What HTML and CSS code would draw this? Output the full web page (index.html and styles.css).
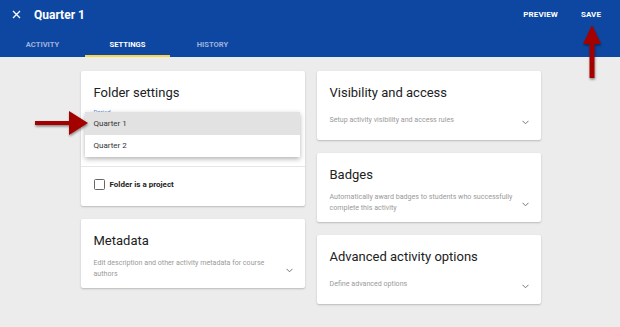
FILE: index.html
```html
<!DOCTYPE html>
<html>
<head>
<meta charset="utf-8">
<link rel="stylesheet" href="styles.css">
</head>
<body>
<header class="appbar">
  <div class="toprow">
    <svg class="close" width="9" height="9" viewBox="0 0 9 9"><path d="M1 1 L8 8 M8 1 L1 8" stroke="#fff" stroke-width="1.3" fill="none"/></svg>
    <span class="title">Quarter 1</span>
    <span class="spacer"></span>
    <span class="action">PREVIEW</span>
    <span class="action save">SAVE</span>
  </div>
  <nav class="tabs">
    <span class="tab">ACTIVITY</span>
    <span class="tab active">SETTINGS</span>
    <span class="tab">HISTORY</span>
  </nav>
</header>
<main class="grid">
  <div class="col">
    <section class="card folder">
      <h2>Folder settings</h2>
      <div class="field">
        <span class="label">Period</span>
      </div>
      <div class="menu">
        <div class="item selected">Quarter 1</div>
        <div class="item">Quarter 2</div>
      </div>
      <div class="divider"></div>
      <label class="check"><span class="box"></span>Folder is a project</label>
    </section>
    <section class="card">
      <h2>Metadata</h2>
      <div class="descrow">
        <p class="desc">Edit description and other activity metadata for course authors</p>
        <svg class="chev" width="7" height="5" viewBox="0 0 7 5"><path d="M0.5 0.8 L3.5 3.8 L6.5 0.8" stroke="#777" stroke-width="1" fill="none"/></svg>
      </div>
    </section>
  </div>
  <div class="col">
    <section class="card">
      <h2>Visibility and access</h2>
      <div class="descrow">
        <p class="desc">Setup activity visibility and access rules</p>
        <svg class="chev" width="7" height="5" viewBox="0 0 7 5"><path d="M0.5 0.8 L3.5 3.8 L6.5 0.8" stroke="#777" stroke-width="1" fill="none"/></svg>
      </div>
    </section>
    <section class="card">
      <h2>Badges</h2>
      <div class="descrow">
        <p class="desc">Automatically award badges to students who successfully complete this activity</p>
        <svg class="chev" width="7" height="5" viewBox="0 0 7 5"><path d="M0.5 0.8 L3.5 3.8 L6.5 0.8" stroke="#777" stroke-width="1" fill="none"/></svg>
      </div>
    </section>
    <section class="card">
      <h2>Advanced activity options</h2>
      <div class="descrow">
        <p class="desc">Define advanced options</p>
        <svg class="chev" width="7" height="5" viewBox="0 0 7 5"><path d="M0.5 0.8 L3.5 3.8 L6.5 0.8" stroke="#777" stroke-width="1" fill="none"/></svg>
      </div>
    </section>
  </div>
</main>
<svg class="arrow-right" width="60" height="30" viewBox="0 0 60 30">
  <path d="M2 13 L36 13 L36 3 L55 15 L36 27 L36 17 L2 17 Z" fill="#a30000" filter="url(#sh)"/>
  <defs><filter id="sh" x="-20%" y="-40%" width="140%" height="180%"><feDropShadow dx="0.5" dy="1.5" stdDeviation="1" flood-color="#000" flood-opacity="0.45"/></filter></defs>
</svg>
<svg class="arrow-up" width="26" height="60" viewBox="0 0 26 60">
  <path d="M13 1 L22 20 L15.5 20 L15.5 54 L10.5 54 L10.5 20 L4 20 Z" fill="#a30000" filter="url(#sh2)"/>
  <defs><filter id="sh2" x="-40%" y="-20%" width="180%" height="140%"><feDropShadow dx="0.5" dy="1.5" stdDeviation="1" flood-color="#000" flood-opacity="0.45"/></filter></defs>
</svg>
</body>
</html>
```
FILE: styles.css
```css
* { box-sizing: border-box; }
html, body { margin: 0; padding: 0; }
body {
  width: 620px;
  height: 327px;
  background: #ececec;
  font-family: Roboto, "Liberation Sans", sans-serif;
  position: relative;
  overflow: hidden;
}
.appbar {
  background: #0d47a1;
  height: 57px;
  color: #fff;
}
.toprow {
  height: 30px;
  display: flex;
  align-items: center;
  padding-left: 12px;
  padding-right: 19px;
}
.close { margin-top: -1px; }
.title {
  margin-left: 13px;
  font-weight: 700;
  font-size: 12px;
  margin-top: -1px;
}
.spacer { flex: 1; }
.action {
  font-size: 8px;
  font-weight: 700;
  letter-spacing: 0.1px;
  margin-top: -1px;
}
.save { margin-left: 23px; }
.tabs {
  display: flex;
  height: 27px;
}
.tab {
  width: 85px;
  display: flex;
  align-items: center;
  justify-content: center;
  font-size: 7.6px;
  font-weight: 700;
  color: #9fb2dc;
  padding-top: 2px;
}
.tab.active {
  color: #fff;
  border-bottom: 2px solid #f5d74a;
  padding-top: 4px;
}
.grid {
  display: grid;
  grid-template-columns: 224px 224px;
  column-gap: 12px;
  justify-content: center;
  padding-top: 14px;
  padding-left: 1px;
}
.col {
  display: flex;
  flex-direction: column;
  gap: 13px;
}
.card {
  background: #fff;
  box-shadow: 0 1px 2px rgba(0,0,0,0.22);
  border-radius: 2px;
  padding: 13px 12px 0 13px;
  height: 69px;
  position: relative;
}
.card h2 {
  margin: 0;
  font-size: 13px;
  font-weight: 400;
  color: #212121;
  line-height: 18px;
}
.descrow {
  display: flex;
  align-items: center;
  margin-top: 8px;
  min-height: 21px;
}
.desc {
  margin: 0;
  flex: 1;
  font-size: 7.1px;
  line-height: 10.5px;
  color: #9a9a9a;
  padding-right: 1px;
}
.chev { margin-top: 3px; }
.card.folder {
  height: 135px;
  padding-left: 0;
  padding-right: 0;
}
.folder h2 { padding-left: 13px; }
.field { height: 32px; padding-left: 13px; padding-top: 6px; }
.label {
  font-size: 6px;
  color: #5a8fd8;
  display: block;
}
.menu {
  position: absolute;
  left: 4px;
  top: 41px;
  width: 215px;
  background: #fff;
  box-shadow: 0 2px 5px rgba(0,0,0,0.3);
}
.item {
  height: 22.5px;
  display: flex;
  align-items: center;
  padding-left: 9px;
  font-size: 8px;
  color: #333;
}
.item.selected { background: #e2e2e2; }
.divider {
  height: 1px;
  background: #e6e6e6;
  margin-top: 32px;
}
.check {
  display: flex;
  align-items: center;
  padding-left: 13px;
  height: 34px;
  font-size: 8px;
  font-weight: 700;
  color: #222;
}
.box {
  width: 11px;
  height: 11px;
  border: 1.3px solid #666;
  border-radius: 1.5px;
  margin-right: 5px;
}
.arrow-right {
  position: absolute;
  left: 33px;
  top: 108px;
}
.arrow-up {
  position: absolute;
  left: 579px;
  top: 24px;
}
```
